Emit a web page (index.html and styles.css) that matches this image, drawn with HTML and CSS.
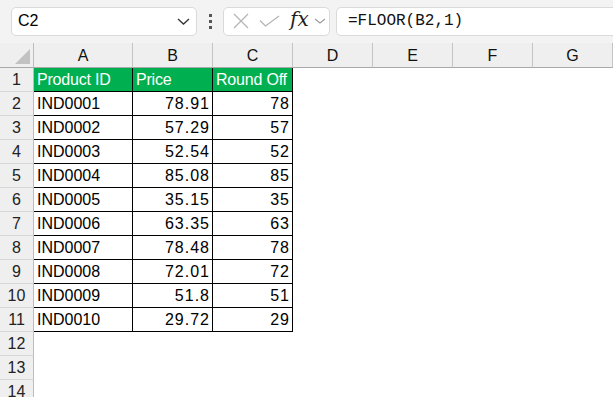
FILE: index.html
```html
<!DOCTYPE html>
<html lang="en">
<head>
    <meta charset="UTF-8">
    <meta name="viewport" content="width=device-width, initial-scale=1.0">
    <title>FLOOR - Round Off</title>
    <link rel="stylesheet" href="styles.css">
</head>
<body>
    <div class="topbar">
        <div class="namebox">
            <span class="ref">C2</span>
            <svg class="chev" width="13" height="7" viewBox="0 0 13 7"><path d="M1 1 L6.5 6 L12 1" fill="none" stroke="#333" stroke-width="1.3"/></svg>
        </div>
        <div class="grip"><i></i><i></i><i></i></div>
        <div class="fxbox">
            <svg class="ico-x" width="16" height="16" viewBox="0 0 16 16"><path d="M1 1 L15 15 M15 1 L1 15" stroke="#b3b3b3" stroke-width="1.2"/></svg>
            <svg class="ico-ok" width="21" height="12" viewBox="0 0 21 12"><path d="M1 5.5 L6.5 11 L20 1" fill="none" stroke="#b3b3b3" stroke-width="1.2"/></svg>
            <span class="fx">fx</span>
            <svg class="chev-sm" width="12" height="6" viewBox="0 0 12 6"><path d="M1 1 L6 5 L11 1" fill="none" stroke="#9a9a9a" stroke-width="1.1"/></svg>
        </div>
        <div class="formula">=FLOOR(B2,1)</div>
    </div>

    <div class="sheet">
        <div class="corner"><span class="tri"></span></div>
        <div class="colhead">A</div><div class="colhead">B</div><div class="colhead">C</div><div class="colhead">D</div>
        <div class="colhead">E</div><div class="colhead">F</div><div class="colhead">G</div>

        <div class="rh">1</div><div class="t hd">Product ID</div><div class="t hd">Price</div><div class="t hd">Round Off</div><div class="c"></div><div class="c"></div><div class="c"></div><div class="c"></div>
        <div class="rh">2</div><div class="t">IND0001</div><div class="t num">78.91</div><div class="t num">78</div><div class="c"></div><div class="c"></div><div class="c"></div><div class="c"></div>
        <div class="rh">3</div><div class="t">IND0002</div><div class="t num">57.29</div><div class="t num">57</div><div class="c"></div><div class="c"></div><div class="c"></div><div class="c"></div>
        <div class="rh">4</div><div class="t">IND0003</div><div class="t num">52.54</div><div class="t num">52</div><div class="c"></div><div class="c"></div><div class="c"></div><div class="c"></div>
        <div class="rh">5</div><div class="t">IND0004</div><div class="t num">85.08</div><div class="t num">85</div><div class="c"></div><div class="c"></div><div class="c"></div><div class="c"></div>
        <div class="rh">6</div><div class="t">IND0005</div><div class="t num">35.15</div><div class="t num">35</div><div class="c"></div><div class="c"></div><div class="c"></div><div class="c"></div>
        <div class="rh">7</div><div class="t">IND0006</div><div class="t num">63.35</div><div class="t num">63</div><div class="c"></div><div class="c"></div><div class="c"></div><div class="c"></div>
        <div class="rh">8</div><div class="t">IND0007</div><div class="t num">78.48</div><div class="t num">78</div><div class="c"></div><div class="c"></div><div class="c"></div><div class="c"></div>
        <div class="rh">9</div><div class="t">IND0008</div><div class="t num">72.01</div><div class="t num">72</div><div class="c"></div><div class="c"></div><div class="c"></div><div class="c"></div>
        <div class="rh">10</div><div class="t">IND0009</div><div class="t num">51.8</div><div class="t num">51</div><div class="c"></div><div class="c"></div><div class="c"></div><div class="c"></div>
        <div class="rh">11</div><div class="t">IND0010</div><div class="t num">29.72</div><div class="t num">29</div><div class="c"></div><div class="c"></div><div class="c"></div><div class="c"></div>
        <div class="rh">12</div><div class="c"></div><div class="c"></div><div class="c"></div><div class="c"></div><div class="c"></div><div class="c"></div><div class="c"></div>
        <div class="rh">13</div><div class="c"></div><div class="c"></div><div class="c"></div><div class="c"></div><div class="c"></div><div class="c"></div><div class="c"></div>
        <div class="rh">14</div><div class="c"></div><div class="c"></div><div class="c"></div><div class="c"></div><div class="c"></div><div class="c"></div><div class="c"></div>
    </div>
</body>
</html>
```

FILE: styles.css
```css
* {
    box-sizing: border-box;
}
html, body {
    margin: 0;
    padding: 0;
    height: 397px;
    overflow: hidden;
    background: #fff;
    font-family: "Liberation Sans", Arial, sans-serif;
    color: #000;
}

/* formula bar */
.topbar {
    display: flex;
    align-items: center;
    height: 43px;
    padding: 0 0 1px 11px;
    background: #f3f3f3;
}
.namebox {
    display: flex;
    align-items: center;
    width: 186px;
    height: 29px;
    padding: 0 6px 0 6px;
    background: #fff;
    border: 1px solid #dadada;
    border-radius: 5px;
}
.ref {
    flex: 1;
    font-size: 16px;
}
.grip {
    width: 26px;
    display: flex;
    flex-direction: column;
    align-items: center;
    gap: 3px;
}
.grip i {
    display: block;
    width: 3px;
    height: 3px;
    background: #555;
}
.fxbox {
    display: flex;
    align-items: center;
    width: 107px;
    height: 29px;
    padding-left: 9px;
    background: #fff;
    border: 1px solid #dadada;
    border-radius: 5px;
}
.ico-x {
    margin-right: 10px;
}
.ico-ok {
    margin-right: 10px;
}
.fx {
    font-family: "DejaVu Serif", "Liberation Serif", serif;
    font-style: italic;
    font-size: 20px;
    color: #1e1e1e;
    margin-right: 5px;
    margin-top: -4px;
}
.formula {
    flex: 1;
    height: 29px;
    margin-left: 6px;
    margin-right: -10px;
    padding-left: 11px;
    line-height: 27px;
    background: #fff;
    border: 1px solid #dadada;
    border-radius: 5px;
    font-family: "Liberation Mono", "DejaVu Sans Mono", monospace;
    font-size: 16px;
    color: #111;
}

/* grid */
.sheet {
    display: grid;
    grid-template-columns: 34px 99px repeat(6, 80px);
    grid-auto-rows: 24px;
    grid-template-rows: 25px;
    font-size: 16px;
}
.corner {
    position: relative;
    background: #efefef;
    border-right: 1px solid #bdbdbd;
    border-bottom: 1px solid #a9a9a9;
}
.tri {
    position: absolute;
    right: 3px;
    bottom: 3px;
    width: 0;
    height: 0;
    border-left: 15px solid transparent;
    border-bottom: 15px solid #c2c2c2;
}
.colhead {
    background: #efefef;
    border-right: 1px solid #c4c4c4;
    border-bottom: 1px solid #a9a9a9;
    text-align: center;
    line-height: 25px;
    color: #111;
}
.rh {
    background: #efefef;
    border-right: 1px solid #bdbdbd;
    border-bottom: 1px solid #d6d6d6;
    text-align: center;
    line-height: 24px;
    color: #222;
}
.c {
    background: #fff;
}
.t {
    border-right: 1px solid #000;
    border-bottom: 1px solid #000;
    padding: 0 3px;
    line-height: 24px;
    white-space: nowrap;
    overflow: hidden;
}
.t.num {
    text-align: right;
    letter-spacing: 1px;
    padding-right: 2px;
}
.t.hd {
    background: #00b050;
    color: #fff;
    letter-spacing: -0.2px;
}
```
